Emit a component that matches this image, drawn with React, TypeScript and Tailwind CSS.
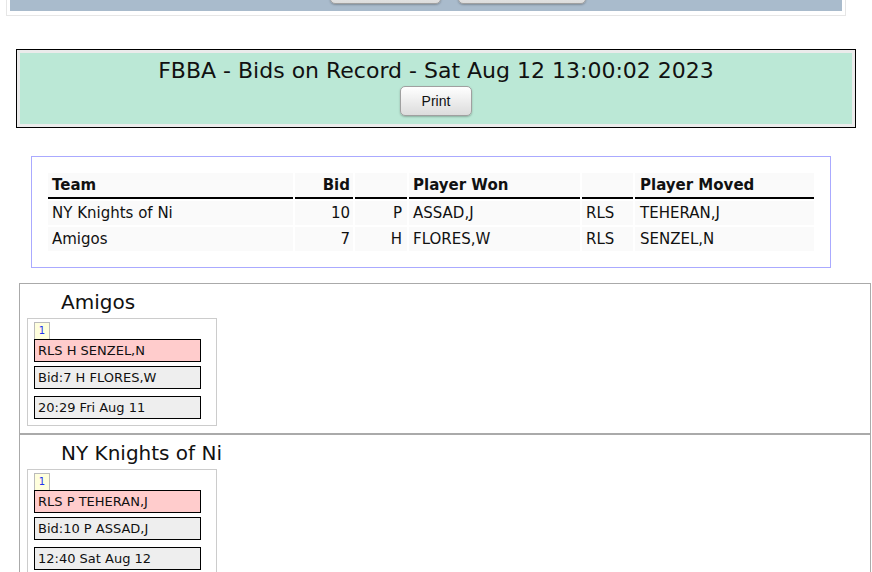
const bids = [
  { team: 'NY Knights of Ni', bid: '10', pos: 'P', won: 'ASSAD,J', action: 'RLS', moved: 'TEHERAN,J' },
  { team: 'Amigos', bid: '7', pos: 'H', won: 'FLORES,W', action: 'RLS', moved: 'SENZEL,N' },
];

const teams = [
  { name: 'Amigos', rls: 'RLS H SENZEL,N', bid: 'Bid:7 H FLORES,W', when: '20:29 Fri Aug 11' },
  { name: 'NY Knights of Ni', rls: 'RLS P TEHERAN,J', bid: 'Bid:10 P ASSAD,J', when: '12:40 Sat Aug 12' },
];

const btn =
  'rounded-[5px] border border-[#a0a0a0] bg-gradient-to-b from-white to-[#dcdcdc] shadow-[0_1px_2px_rgba(0,0,0,0.25)]';

function TeamBox({ t }: { t: (typeof teams)[number] }) {
  return (
    <div className="border border-[#aaa] pl-[7px] pt-[6px] pb-[7px]">
      <h2 className="pl-[34px] text-[20px] leading-[24px] text-[#111] mb-[4px]">{t.name}</h2>
      <div className="w-[190px] border border-[#ccc] px-[6px] pt-[3px] pb-[6px]">
        <div className="w-[16px] h-[17px] border border-b-0 border-[#bbb] bg-[#ffffdd] text-[10px] leading-[16px] text-center text-[#2233ee]">
          1
        </div>
        <div className="w-[167px] h-[23px] border border-black bg-[#ffcccc] pl-[3px] text-[13px] leading-[21px]">{t.rls}</div>
        <div className="w-[167px] h-[23px] mt-[4px] border border-black bg-[#eeeeee] pl-[3px] text-[13px] leading-[21px]">{t.bid}</div>
        <div className="w-[167px] h-[23px] mt-[7px] border border-black bg-[#eeeeee] pl-[3px] text-[13px] leading-[21px]">{t.when}</div>
      </div>
    </div>
  );
}

export default function App() {
  const cell = 'bg-[#fafafa] h-[24px] leading-[25px] text-[15px]';
  const head = 'bg-[#fafafa] h-[26px] leading-[24px] text-[15px] font-bold border-b-2 border-black';
  return (
    <div className="w-[872px] h-[572px] overflow-hidden bg-white text-[#111]" style={{ fontFamily: '"DejaVu Sans", Verdana, sans-serif' }}>
      {/* top nav remainder */}
      <div className="ml-[6px] w-[840px] border border-t-0 border-[#e6e6e6] px-[3px] pb-[4px]">
        <div className="h-[11px] bg-[#a9bbcc] overflow-hidden flex justify-center items-end gap-[17px] pb-[7px] pl-[64px]">
          <div className={`shrink-0 w-[111px] h-[30px] ${btn}`} />
          <div className={`shrink-0 w-[128px] h-[30px] ${btn}`} />
        </div>
      </div>

      {/* title */}
      <div className="ml-[16px] mt-[33px] w-[840px] border border-black bg-[#ebebeb] p-[3px]">
        <div className="bg-[#bbe8d6] pt-[5px] pb-[8px] flex flex-col items-center">
          <h1 className="text-[22px] leading-[26px]">FBBA - Bids on Record - Sat Aug 12 13:00:02 2023</h1>
          <button
            className={`mt-[2px] w-[72px] h-[30px] text-[14px] text-[#111] ${btn}`}
            style={{ fontFamily: '"Liberation Sans", Arial, sans-serif' }}
          >
            Print
          </button>
        </div>
      </div>

      {/* bids table */}
      <div className="ml-[31px] mt-[28px] w-[800px] border border-[#aaaaff] pl-[16px] pt-[16px] pb-[16px]">
        <div className="grid grid-cols-[245px_58px_52px_171px_51px_179px] gap-[2px]">
          <div className={`${head} pl-[4px]`}>Team</div>
          <div className={`${head} text-right pr-[3px]`}>Bid</div>
          <div className={head} />
          <div className={`${head} pl-[4px]`}>Player Won</div>
          <div className={head} />
          <div className={`${head} pl-[5px]`}>Player Moved</div>
          {bids.map((b) => (
            <>
              <div key={b.team} className={`${cell} pl-[4px]`}>{b.team}</div>
              <div className={`${cell} text-right pr-[3px]`}>{b.bid}</div>
              <div className={`${cell} text-right pr-[5px]`}>{b.pos}</div>
              <div className={`${cell} pl-[4px]`}>{b.won}</div>
              <div className={`${cell} pl-[4px]`}>{b.action}</div>
              <div className={`${cell} pl-[5px]`}>{b.moved}</div>
            </>
          ))}
        </div>
      </div>

      {/* team boxes */}
      <div className="ml-[19px] mt-[15px] w-[852px]">
        {teams.map((t) => (
          <TeamBox key={t.name} t={t} />
        ))}
      </div>
    </div>
  );
}
